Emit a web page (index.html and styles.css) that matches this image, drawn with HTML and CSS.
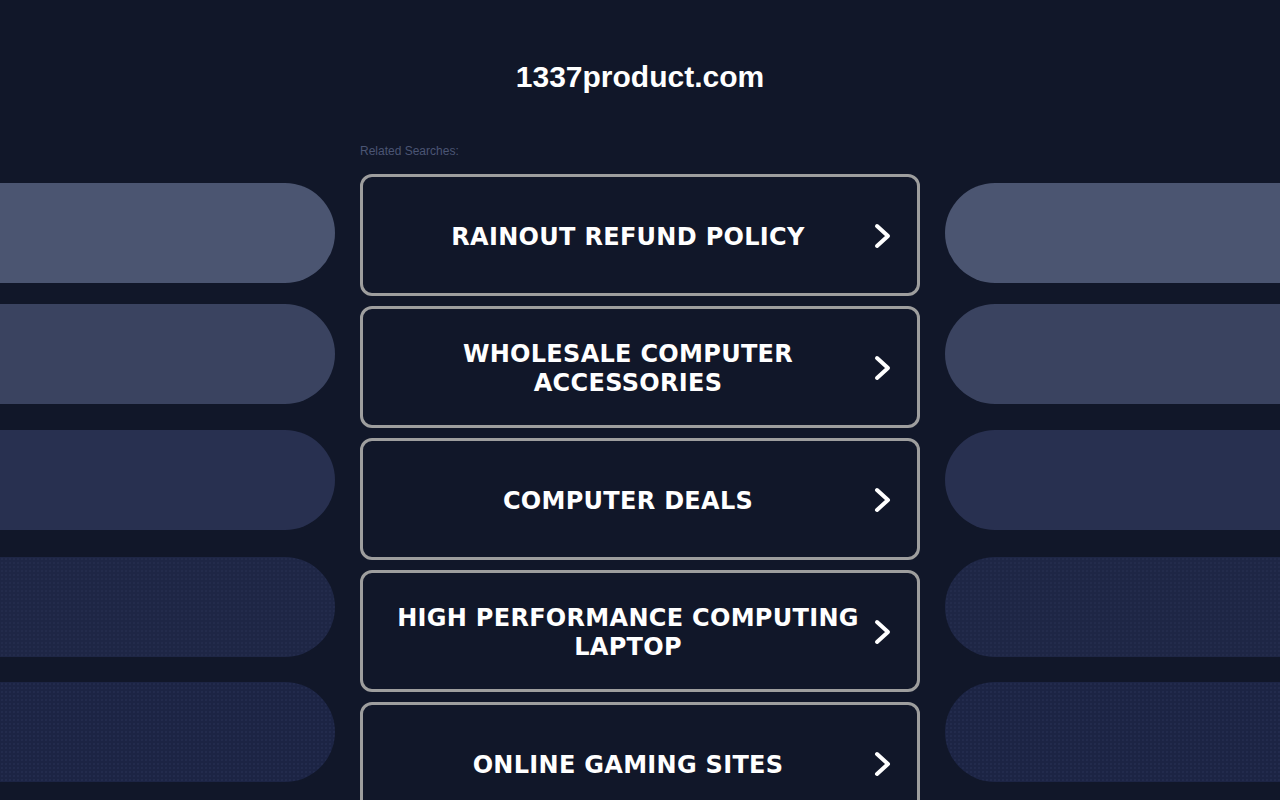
FILE: index.html
```html
<!DOCTYPE html>
<html lang="en">
<head>
<meta charset="utf-8">
<title>1337product.com</title>
<link rel="stylesheet" href="styles.css">
</head>
<body>
<header class="header">
  <h1 class="domain">1337product.com</h1>
</header>
<main class="layout">
  <div class="side side-left">
    <div class="pill pill-1"></div>
    <div class="pill pill-2"></div>
    <div class="pill pill-3"></div>
    <div class="pill pill-4"></div>
    <div class="pill pill-5"></div>
  </div>
  <section class="center">
    <p class="related">Related Searches:</p>
    <div class="links">
      <a class="link" href="#"><span class="link-text">RAINOUT REFUND POLICY</span><svg class="chev" viewBox="0 0 20 28" width="20" height="28"><path d="M4 4 L15 14 L4 24" fill="none" stroke="#fff" stroke-width="4" stroke-linecap="round" stroke-linejoin="round"/></svg></a>
      <a class="link" href="#"><span class="link-text">WHOLESALE COMPUTER ACCESSORIES</span><svg class="chev" viewBox="0 0 20 28" width="20" height="28"><path d="M4 4 L15 14 L4 24" fill="none" stroke="#fff" stroke-width="4" stroke-linecap="round" stroke-linejoin="round"/></svg></a>
      <a class="link" href="#"><span class="link-text">COMPUTER DEALS</span><svg class="chev" viewBox="0 0 20 28" width="20" height="28"><path d="M4 4 L15 14 L4 24" fill="none" stroke="#fff" stroke-width="4" stroke-linecap="round" stroke-linejoin="round"/></svg></a>
      <a class="link" href="#"><span class="link-text">HIGH PERFORMANCE COMPUTING LAPTOP</span><svg class="chev" viewBox="0 0 20 28" width="20" height="28"><path d="M4 4 L15 14 L4 24" fill="none" stroke="#fff" stroke-width="4" stroke-linecap="round" stroke-linejoin="round"/></svg></a>
      <a class="link" href="#"><span class="link-text">ONLINE GAMING SITES</span><svg class="chev" viewBox="0 0 20 28" width="20" height="28"><path d="M4 4 L15 14 L4 24" fill="none" stroke="#fff" stroke-width="4" stroke-linecap="round" stroke-linejoin="round"/></svg></a>
    </div>
  </section>
  <div class="side side-right">
    <div class="pill pill-1"></div>
    <div class="pill pill-2"></div>
    <div class="pill pill-3"></div>
    <div class="pill pill-4"></div>
    <div class="pill pill-5"></div>
  </div>
</main>
</body>
</html>
```

FILE: styles.css
```css
html, body {
  margin: 0;
  padding: 0;
  background: #111729;
  height: 100%;
  overflow: hidden;
}

body {
  font-family: "Liberation Sans", Arial, sans-serif;
  color: #fff;
}

.header {
  padding-top: 60px;
  height: 84px;
  text-align: center;
}

.domain {
  margin: 0;
  font-family: "Liberation Sans", Arial, sans-serif;
  font-weight: bold;
  font-size: 30px;
  line-height: 34px;
  color: #fff;
}

.layout {
  display: grid;
  grid-template-columns: 360px 560px 1fr;
}

.side {
  display: flex;
  flex-direction: column;
  padding-top: 39px;
}

.side-right {
  align-items: flex-end;
}

.pill {
  width: 335px;
  height: 100px;
  flex: none;
}

.side-left .pill {
  border-radius: 0 50px 50px 0;
}

.side-right .pill {
  border-radius: 50px 0 0 50px;
}

.pill-1 { background: #4b5571; }
.pill-2 { background: #3a4360; margin-top: 21px; }
.pill-3 { background: #283050; margin-top: 26px; }
.pill-4 {
  background-color: #1e2645;
  background-image: radial-gradient(rgba(90, 105, 150, 0.12) 0.6px, transparent 0.9px);
  background-size: 4px 4px;
  margin-top: 27px;
}
.pill-5 {
  background-color: #1c2444;
  background-image: radial-gradient(rgba(90, 105, 150, 0.16) 0.6px, transparent 0.9px);
  background-size: 4px 4px;
  margin-top: 25px;
}

.center {
  display: flex;
  flex-direction: column;
}

.related {
  margin: 0;
  font-size: 12px;
  line-height: 14px;
  color: #4b5574;
}

.links {
  margin-top: 16px;
  display: flex;
  flex-direction: column;
  gap: 10px;
}

.link {
  box-sizing: border-box;
  height: 122px;
  border: 3px solid #9e9e9e;
  border-radius: 12px;
  display: flex;
  align-items: center;
  gap: 8px;
  padding: 2px 24px 0 28px;
  text-decoration: none;
  color: #fff;
  background: #111729;
}

.link-text {
  flex: 1;
  text-align: center;
  padding-top: 2px;
  font-family: "DejaVu Sans", Verdana, sans-serif;
  font-weight: bold;
  font-size: 24px;
  line-height: 29px;
  letter-spacing: 0.3px;
  color: #fff;
}

.chev {
  flex: none;
  display: block;
}
```
